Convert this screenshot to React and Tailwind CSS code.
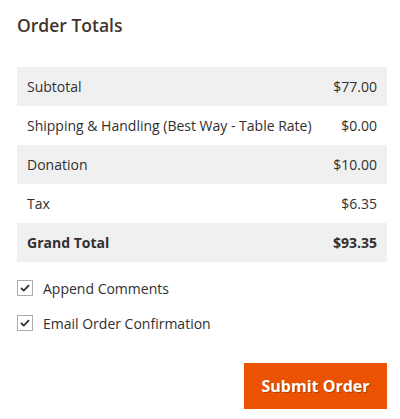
import React from 'react';

const rows = [
  { label: 'Subtotal', value: '$77.00' },
  { label: 'Shipping & Handling (Best Way - Table Rate)', value: '$0.00' },
  { label: 'Donation', value: '$10.00' },
  { label: 'Tax', value: '$6.35' },
];

const CheckBox = ({ label }) => (
  <label className="flex items-center gap-[10px] h-[20px]">
    <span className="w-[16px] h-[16px] border border-[#adadad] bg-white flex items-center justify-center">
      <svg width="10" height="8" viewBox="0 0 10 8" fill="none">
        <path d="M1 4l2.8 2.6L9 1.2" stroke="#303030" strokeWidth="1.8" />
      </svg>
    </span>
    <span className="text-[14px] text-[#303030]">{label}</span>
  </label>
);

const App = () => {
  return (
    <div className="w-[400px] h-[419px] bg-white pl-[17px] pr-[13px] pt-[13px]" style={{ fontFamily: '"Open Sans", sans-serif' }}>
      <h2 className="text-[17.5px] font-semibold text-[#41362f] leading-[24px]">Order Totals</h2>

      {/* Totals table */}
      <div className="mt-[30px] w-[370px]">
        {rows.map((row, i) => (
          <div
            key={row.label}
            className={`flex justify-between items-center h-[39px] px-[10px] text-[14px] text-[#303030] ${i % 2 === 0 ? 'bg-[#f0f0f0]' : 'bg-white'}`}
          >
            <span>{row.label}</span>
            <span>{row.value}</span>
          </div>
        ))}
        <div className="flex justify-between items-center h-[39px] px-[10px] text-[14px] font-bold text-[#303030] bg-[#f0f0f0]">
          <span>Grand Total</span>
          <span>$93.35</span>
        </div>
      </div>

      {/* Options */}
      <div className="mt-[16px] flex flex-col gap-[15px]">
        <CheckBox label="Append Comments" />
        <CheckBox label="Email Order Confirmation" />
      </div>

      <div className="flex justify-end mt-[30px]">
        <button
          className="w-[143px] h-[46px] bg-[#eb5202] text-white text-[16px] font-bold"
          style={{ textShadow: '1px 1px 0 rgba(0,0,0,0.25)' }}
        >
          Submit Order
        </button>
      </div>
    </div>
  );
};

export default App;
